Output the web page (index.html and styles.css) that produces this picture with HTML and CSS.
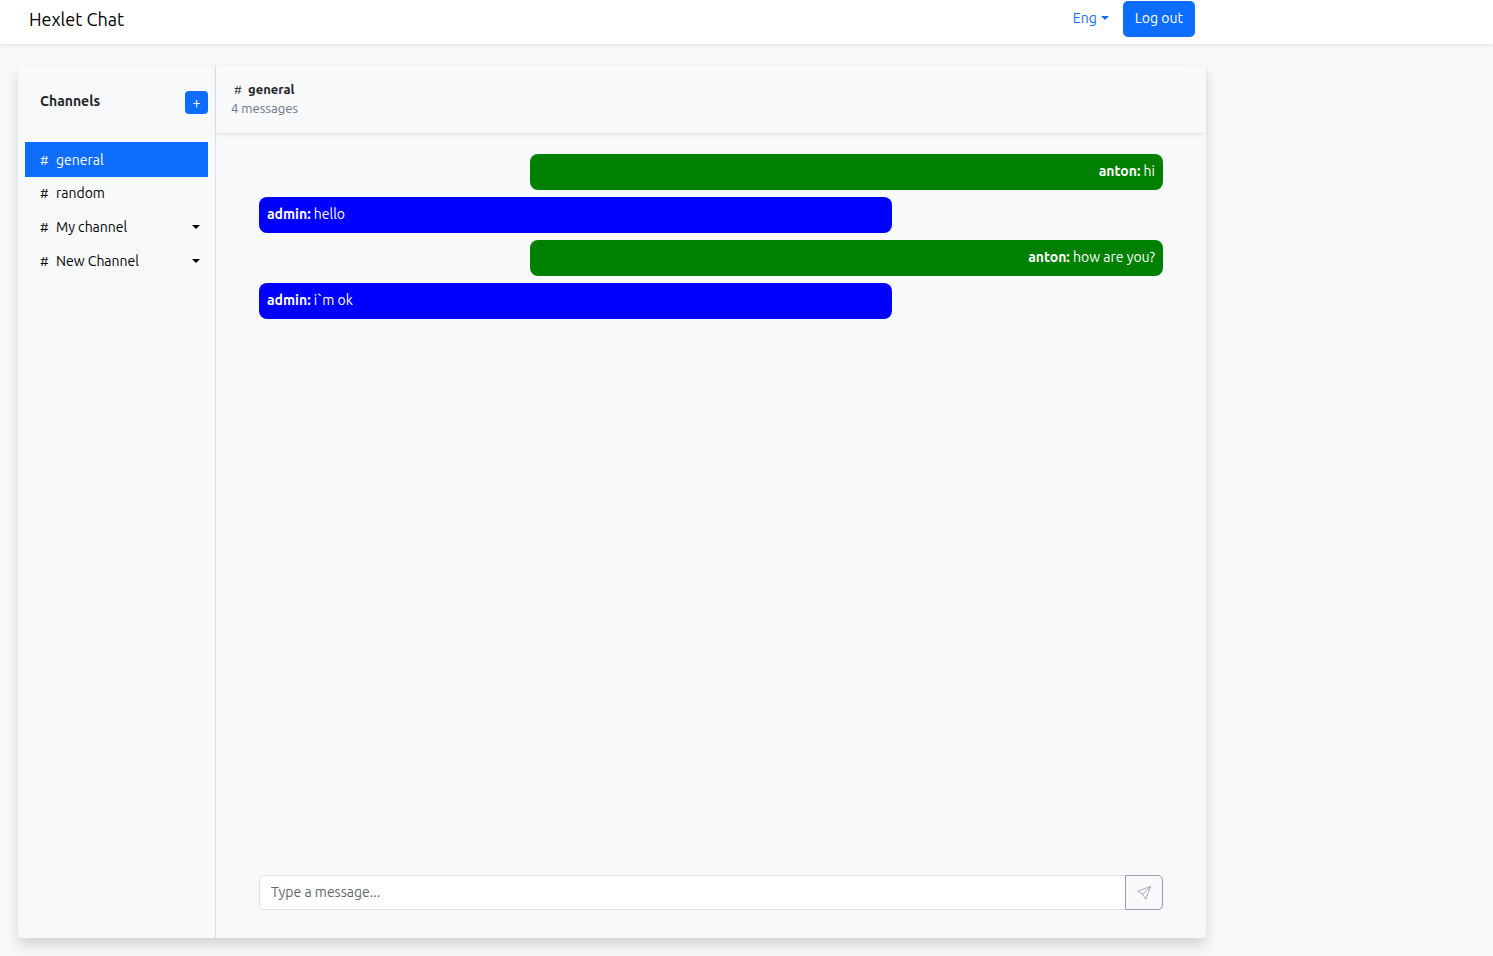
FILE: index.html
```html
<!DOCTYPE html>
<html lang="en">
<head>
<meta charset="utf-8">
<meta name="viewport" content="width=device-width, initial-scale=1">
<title>Hexlet Chat</title>
<link rel="stylesheet" href="styles.css">
</head>
<body>
<header class="navbar">
  <div class="navbar-inner">
    <a class="brand" href="#">Hexlet Chat</a>
    <div class="actions">
      <button class="language caret" type="button" aria-haspopup="true">Eng</button>
      <button class="logout" type="button">Log out</button>
    </div>
  </div>
</header>
<main class="chat">
  <aside class="sidebar">
    <div class="sidebar-head">
      <b>Channels</b>
      <button class="add" type="button">+</button>
    </div>
    <ul class="channels">
      <li><button class="channel active" type="button"><span class="hash">#</span>general</button></li>
      <li><button class="channel" type="button"><span class="hash">#</span>random</button></li>
      <li><button class="channel" type="button"><span class="hash">#</span>My channel</button><button class="menu caret" type="button" aria-label="My channel options"></button></li>
      <li><button class="channel" type="button"><span class="hash">#</span>New Channel</button><button class="menu caret" type="button" aria-label="New Channel options"></button></li>
    </ul>
  </aside>
  <section class="conversation">
    <div class="conversation-head">
      <div class="name"><span class="hash">#</span><b>general</b></div>
      <div class="count">4 messages</div>
    </div>
    <div class="messages">
      <div class="message own"><b>anton:</b> hi</div>
      <div class="message"><b>admin:</b> hello</div>
      <div class="message own"><b>anton:</b> how are you?</div>
      <div class="message"><b>admin:</b> i`m ok</div>
    </div>
    <form class="composer">
      <input type="text" placeholder="Type a message..." aria-label="New message">
      <button type="submit" aria-label="Send" disabled><svg viewBox="0 0 16 16" width="14" height="14" aria-hidden="true"><path d="M15.5.5 10 15.3 6.6 9.4.7 6ZM6.6 9.4 15.5.5"/></svg></button>
    </form>
  </section>
</main>
</body>
</html>
```
FILE: styles.css
```css
* { box-sizing: border-box; }
body {
  margin: 0;
  min-height: 100vh;
  display: flex;
  flex-direction: column;
  background: #f8f9fb;
  color: #212529;
  font: 14px/22px Ubuntu, "Noto Sans", sans-serif;
}
button, input { font: inherit; }
button { border: 0; padding: 0; background: none; color: inherit; cursor: pointer; }
b { font-weight: 600; }

.navbar { height: 44px; background: #fff; box-shadow: 0 2px 4px rgba(0, 0, 0, .075); }
.navbar-inner {
  display: flex;
  justify-content: space-between;
  max-width: 1188px;
  margin-left: 18px;
  padding: 1px 11px 0;
}
.brand { color: #000; font-size: 18px; line-height: 36px; text-decoration: none; }
.actions { display: flex; gap: 14px; }
.language { height: 34px; color: #0d6efd; }
.logout { height: 36px; padding: 0 12px 2px; border-radius: 5px; background: #0d6efd; color: #fff; }
.caret::after {
  content: "";
  display: inline-block;
  margin-left: 4px;
  vertical-align: 3px;
  border-top: 4px solid;
  border-right: 4px solid transparent;
  border-left: 4px solid transparent;
}

.chat {
  flex: 1;
  display: grid;
  grid-template-columns: 1fr 5fr;
  max-width: 1188px;
  margin: 22px 18px 18px;
  border-radius: 5px;
  box-shadow: 0 7px 14px rgba(0, 0, 0, .15);
}
.sidebar { padding: 25px 7px 0; border-right: 1px solid #dee2e6; }
.sidebar-head { display: flex; justify-content: space-between; padding-left: 15px; margin-bottom: 28px; line-height: 20px; }
.add { width: 23px; height: 23px; border-radius: 4px; background: #0d6efd; color: #fff; }
.channels { list-style: none; margin: 0; padding: 0; }
.channels li { display: flex; height: 34px; }
.channel { flex: 1; padding: 0 15px; text-align: left; color: #000; }
.channel.active { height: 35px; background: #0d6efd; color: #fff; }
.hash { display: inline-block; width: 16px; font-size: 13px; }
.menu { width: 24px; color: #000; }
.menu::after { margin: 0; }

.conversation { display: flex; flex-direction: column; min-width: 0; }
.conversation-head { padding: 14px 15px 16px; box-shadow: 0 2px 4px rgba(0, 0, 0, .075); font-size: 13px; line-height: 18px; }
.conversation-head .hash { padding-left: 3px; width: 17px; font-size: 12px; }
.conversation-head .name { line-height: 19px; }
.count { color: #6c757d; }
.messages { flex: 1; display: flex; flex-direction: column; gap: 7px; padding: 21px 43px; }
.message { width: 70%; height: 36px; padding: 6px 8px; border-radius: 8px; background: #00f; color: #fff; }
.message.own { align-self: flex-end; background: #008000; text-align: right; }
.composer { display: flex; height: 35px; margin: 0 43px 28px; }
.composer input {
  flex: 1;
  min-width: 0;
  padding: 0 11px 1px;
  border: 1px solid #dee2e6;
  border-right: 0;
  border-radius: 5px 0 0 5px;
  background: #fff;
  color: #212529;
}
.composer input::placeholder { color: #5f666c; opacity: 1; }
.composer button { display: grid; place-items: center; width: 38px; border: 1px solid #9b9fa6; border-radius: 0 5px 5px 0; }
.composer path { fill: none; stroke: #9b9fa6; stroke-linejoin: round; }
```
